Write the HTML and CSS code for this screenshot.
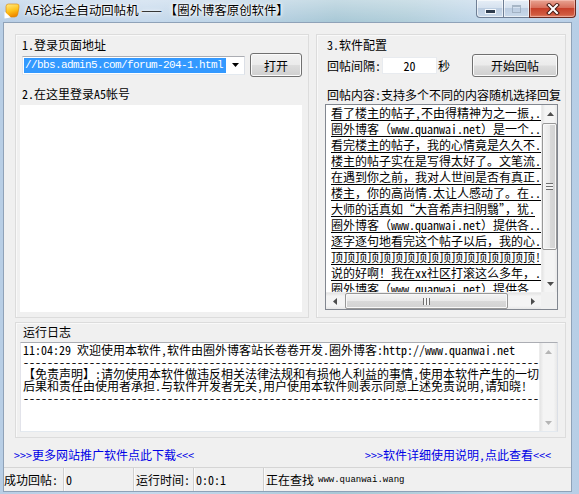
FILE: index.html
```html
<!DOCTYPE html>
<html>
<head>
<meta charset="utf-8">
<link rel="stylesheet" href="styles.css">
</head>
<body>
<div class="window">
  <div class="titlebar">
    <svg class="appicon" viewBox="0 0 16 16" width="16" height="16">
      <defs>
        <linearGradient id="ig" x1="0" y1="0" x2="0.3" y2="1">
          <stop offset="0" stop-color="#ffec8a"/>
          <stop offset="0.6" stop-color="#ffc21a"/>
          <stop offset="1" stop-color="#f08c00"/>
        </linearGradient>
      </defs>
      <path d="M2 3.5 Q2 1 4.5 1 H13 Q15.5 1 15 4 L13.8 11 Q13.3 14 10.5 14 H5 Q2 14 2 11 Z" fill="url(#ig)" stroke="#d98200" stroke-width="0.6"/>
      <path d="M0.5 8.5 L7 14.5 L0.5 15.5 Z" fill="#ffffff"/>
    </svg>
    <span class="title">A5论坛全自动回帖机 —— 【圈外博客原创软件】</span>
    <div class="capbtns">
      <div class="cb cb-min"><span class="minbar"></span></div>
      <div class="cb cb-max"><span class="maxbox"></span></div>
      <div class="cb cb-close">
        <svg width="14" height="12" viewBox="0 0 14 12">
          <path d="M3 2 L11 10 M11 2 L3 10" stroke="#4a1c14" stroke-width="4" stroke-linecap="square"/>
          <path d="M3 2 L11 10 M11 2 L3 10" stroke="#ffffff" stroke-width="2" stroke-linecap="square"/>
        </svg>
      </div>
    </div>
  </div>

  <div class="client">
    <div class="toprow">
      <div class="panel panel-left">
        <div class="lbl lbl1">1.登录页面地址</div>
        <div class="row row1">
          <div class="combo">
            <span class="sel">//bbs.admin5.com/forum-204-1.html</span>
            <svg class="dd" width="7" height="4" viewBox="0 0 7 4"><path d="M0 0 H7 L3.5 4 Z" fill="#000"/></svg>
          </div>
          <div class="btn btn-open">打开</div>
        </div>
        <div class="lbl lbl2">2.在这里登录A5帐号</div>
        <div class="browser"></div>
      </div>

      <div class="panel panel-right">
        <div class="lbl lbl3">3.软件配置</div>
        <div class="row row2">
          <span>回帖间隔:</span>
          <div class="num">20</div>
          <span class="sec">秒</span>
          <div class="btn btn-start">开始回帖</div>
        </div>
        <div class="lbl lbl4">回帖内容:支持多个不同的内容随机选择回复</div>
        <div class="list">
          <div class="items">
            <div class="item">看了楼主的帖子,不由得精神为之一振,.</div>
            <div class="item">圈外博客（www.quanwai.net）是一个..</div>
            <div class="item">看完楼主的帖子，我的心情竟是久久不.</div>
            <div class="item">楼主的帖子实在是写得太好了。文笔流.</div>
            <div class="item">在遇到你之前，我对人世间是否有真正.</div>
            <div class="item">楼主，你的高尚情.太让人感动了。在..</div>
            <div class="item">大师的话真如“大音希声扫阴翳”，犹.</div>
            <div class="item">圈外博客（www.quanwai.net）提供各..</div>
            <div class="item">逐字逐句地看完这个帖子以后，我的心.</div>
            <div class="item">顶顶顶顶顶顶顶顶顶顶顶顶顶顶顶顶顶!</div>
            <div class="item">说的好啊！我在xx社区打滚这么多年，.</div>
            <div class="item">圈外博客（www.quanwai.net）提供各..</div>
          </div>
          <div class="vscroll">
            <div class="arrow"><svg width="7" height="4" viewBox="0 0 7 4"><path d="M0 4 L3.5 0 L7 4 Z" fill="#4d4d4d"/></svg></div>
            <div class="vthumb"><span class="grip-h"></span></div>
            <div class="spacer"></div>
            <div class="arrow"><svg width="7" height="4" viewBox="0 0 7 4"><path d="M0 0 H7 L3.5 4 Z" fill="#4d4d4d"/></svg></div>
          </div>
          <div class="hscroll">
            <div class="arrow"><svg width="4" height="7" viewBox="0 0 4 7"><path d="M4 0 V7 L0 3.5 Z" fill="#4d4d4d"/></svg></div>
            <div class="hthumb"><span class="grip-v"></span></div>
            <div class="spacer"></div>
            <div class="arrow"><svg width="4" height="7" viewBox="0 0 4 7"><path d="M0 0 V7 L4 3.5 Z" fill="#4d4d4d"/></svg></div>
          </div>
          <div class="corner"></div>
        </div>
      </div>
    </div>

    <div class="panel panel-log">
      <div class="lbl lbl5">运行日志</div>
      <div class="logbox">
        <div class="logtext">
          <div class="ll">11:04:29 欢迎使用本软件,软件由圈外博客站长卷卷开发.圈外博客:http://www.quanwai.net</div>
          <div class="ll dash">--------------------------------------------------------------------------------------</div>
          <div class="ll">【免责声明】:请勿使用本软件做违反相关法律法规和有损他人利益的事情,使用本软件产生的一切</div>
          <div class="ll">后果和责任由使用者承担.与软件开发者无关,用户使用本软件则表示同意上述免责说明,请知晓!</div>
          <div class="ll dash">--------------------------------------------------------------------------------------</div>
        </div>
        <div class="vscroll vscroll-off">
          <div class="arrow"><svg width="7" height="4" viewBox="0 0 7 4"><path d="M0 4 L3.5 0 L7 4 Z" fill="#b5b5b5"/></svg></div>
          <div class="spacer"></div>
          <div class="arrow"><svg width="7" height="4" viewBox="0 0 7 4"><path d="M0 0 H7 L3.5 4 Z" fill="#b5b5b5"/></svg></div>
        </div>
      </div>
    </div>

    <div class="links">
      <a class="lnk">&gt;&gt;&gt;更多网站推广软件点此下载&lt;&lt;&lt;</a>
      <a class="lnk">&gt;&gt;&gt;软件详细使用说明,点此查看&lt;&lt;&lt;</a>
    </div>

    <div class="status">
      <div class="cell c1">成功回帖:</div>
      <div class="cell c2">0</div>
      <div class="cell c3">运行时间:</div>
      <div class="cell c4">0:0:1</div>
      <div class="cell c5">正在查找 <span class="small">www.quanwai.wang</span></div>
    </div>
  </div>
</div>
</body>
</html>
```

FILE: styles.css
```css
html, body {
  margin: 0;
  padding: 0;
  background: #c4d8ec;
}

.window {
  width: 579px;
  height: 494px;
  box-sizing: border-box;
  padding: 0 7px 2px 3px;
  display: flex;
  flex-direction: column;
  background:
    linear-gradient(180deg, rgba(255,255,255,0.35) 0px, rgba(255,255,255,0) 22px),
    linear-gradient(90deg, #b8cee5 0%, #c6d9ec 25%, #bcd3e6 40%, #a8c8d6 58%, #b1ceda 70%, #c3d8ec 85%, #b7cee6 100%);
  font-family: "Noto Sans Mono CJK SC", "Noto Sans CJK SC", "DejaVu Sans", sans-serif;
  font-size: 12px;
  color: #000;
  overflow: hidden;
}

/* ---------- title bar ---------- */
.titlebar {
  height: 22px;
  flex: none;
  display: flex;
  align-items: flex-start;
}

.appicon {
  margin: 3px 0 0 1px;
  flex: none;
}

.title {
  margin-left: 5px;
  line-height: 20px;
  font-size: 12.4px;
  white-space: nowrap;
  font-family: "Noto Sans CJK SC", sans-serif;
  text-shadow: 0 0 5px #fff, 0 0 3px #fff, 0 0 1px #fff;
}

.capbtns {
  margin-left: auto;
  margin-right: -4px;
  display: flex;
  height: 18px;
  flex: none;
}

.cb {
  box-sizing: border-box;
  height: 18px;
  display: flex;
  align-items: center;
  justify-content: center;
  border: 1px solid #6f7f95;
  border-top: none;
}

.cb-min {
  width: 27px;
  border-right: none;
  border-radius: 0 0 0 4px;
  background: linear-gradient(180deg, #e6eef7 0%, #d6e2ef 45%, #bccde1 50%, #c9d9ea 100%);
  box-shadow: inset 0 0 0 1px rgba(255,255,255,0.6);
}

.minbar {
  width: 9px;
  height: 3px;
  margin-top: 5px;
  background: #2f3d4f;
  border: 1px solid #f4f8fc;
}

.cb-max {
  width: 26px;
  border-right: none;
  background: linear-gradient(180deg, #e6eef7 0%, #d6e2ef 45%, #bccde1 50%, #c9d9ea 100%);
  box-shadow: inset 0 0 0 1px rgba(255,255,255,0.6);
}

.maxbox {
  width: 7px;
  height: 5px;
  border: 1px solid #9aaabb;
  border-top-width: 2px;
  opacity: 0.8;
}

.cb-close {
  width: 47px;
  border-radius: 0 0 4px 0;
  border-color: #6b2a20;
  background: linear-gradient(180deg, #e8a493 0%, #d8705c 45%, #c7412b 50%, #d05a3f 85%, #e0846a 100%);
  box-shadow: inset 0 0 0 1px rgba(255,210,200,0.5);
}

/* ---------- client ---------- */
.client {
  flex: 1;
  display: flex;
  flex-direction: column;
  background: #f0f0f0;
  border: 1px solid #8fa2b8;
  min-height: 0;
}

.toprow {
  display: flex;
  gap: 7px;
  margin: 11px 0 0 11px;
}

.panel {
  box-sizing: border-box;
  border: 1px solid #dcdcdc;
  box-shadow: inset 1px 1px 0 #f9f9f9;
  display: flex;
  flex-direction: column;
}

.panel-left {
  width: 294px;
  height: 284px;
}

.panel-right {
  width: 250px;
  height: 284px;
}

.lbl {
  height: 12px;
  line-height: 12px;
  white-space: nowrap;
}

.lbl1 { margin: 4px 0 0 6px; }
.lbl2 { margin: 11px 0 0 6px; }
.lbl3 { margin: 4px 0 0 10px; }
.lbl4 { margin: 12px 0 0 10px; }
.lbl5 { margin: 3px 0 0 7px; }

.row {
  display: flex;
  align-items: center;
  height: 24px;
  margin-top: 2px;
}

.row1 { margin-left: 6px; }
.row2 { margin-left: 10px; }

.combo {
  width: 223px;
  height: 19px;
  box-sizing: border-box;
  border: 1px solid;
  border-color: #abadb3 #dbdfe6 #e3e9ef #e2e3ea;
  background: #fff;
  display: flex;
  align-items: center;
  padding-left: 1px;
}

.sel {
  background: #3399ff;
  color: #fff;
  font-family: "Liberation Mono", monospace;
  font-size: 11px;
  letter-spacing: -0.6px;
  line-height: 15px;
  height: 15px;
  padding: 0 3px 0 1px;
  white-space: nowrap;
}

.dd {
  margin-left: auto;
  margin-right: 5px;
}

.btn {
  box-sizing: border-box;
  border: 1px solid #707070;
  border-radius: 3px;
  background: linear-gradient(180deg, #f2f2f2 0%, #ebebeb 48%, #dddddd 52%, #cfcfcf 100%);
  box-shadow: inset 0 0 0 1px #fbfbfb;
  display: flex;
  align-items: center;
  justify-content: center;
  white-space: nowrap;
}

.btn-open {
  width: 52px;
  height: 24px;
  margin-left: 5px;
}

.btn-start {
  width: 86px;
  height: 23px;
  margin-left: 22px;
}

.num {
  width: 55px;
  height: 17px;
  box-sizing: border-box;
  margin-left: 1px;
  background: #fff;
  border: 1px solid #e8ebef;
  text-align: center;
  line-height: 15px;
}

.sec { margin-left: 1px; }

.browser {
  margin: 5px 0 0 4px;
  width: 282px;
  height: 207px;
  background: #fff;
}

/* ---------- list ---------- */
.list {
  margin: 3px 0 0 8px;
  width: 233px;
  height: 206px;
  box-sizing: border-box;
  border: 1px solid #828790;
  background: #fff;
  display: grid;
  grid-template-columns: 1fr 16px;
  grid-template-rows: 1fr 17px;
}

.items {
  overflow: hidden;
  padding-left: 5px;
  min-width: 0;
}

.item {
  height: 16px;
  line-height: 16px;
  white-space: nowrap;
  overflow: hidden;
  text-decoration: underline;
  text-underline-offset: 2px;
}

.vscroll {
  display: flex;
  flex-direction: column;
  background: linear-gradient(90deg, #e4e4e4 0%, #f4f4f4 20%, #f4f4f4 80%, #e8e8e8 100%);
  border-left: 1px solid #ececec;
}

.hscroll {
  display: flex;
  background: linear-gradient(180deg, #e4e4e4 0%, #f4f4f4 20%, #f4f4f4 80%, #e8e8e8 100%);
  border-top: 1px solid #ececec;
}

.arrow {
  flex: none;
  width: 16px;
  height: 17px;
  display: flex;
  align-items: center;
  justify-content: center;
}

.hscroll .arrow {
  width: 17px;
  height: 16px;
}

.spacer { flex: 1; }

.vthumb {
  margin: 1px 0 0 0;
  height: 127px;
  box-sizing: border-box;
  border: 1px solid #979797;
  border-radius: 2px;
  background: linear-gradient(90deg, #f4f4f4 0%, #e9e9e9 50%, #d9d9d9 51%, #d2d2d2 100%);
  box-shadow: inset 0 0 0 1px #f8f8f8;
  display: flex;
  align-items: center;
  justify-content: center;
}

.grip-h {
  width: 7px;
  height: 7px;
  background: repeating-linear-gradient(180deg, #6f6f6f 0px, #6f6f6f 1px, #f4f4f4 1px, #f4f4f4 3px);
}

.hthumb {
  margin-left: 2px;
  width: 163px;
  box-sizing: border-box;
  border: 1px solid #979797;
  border-radius: 2px;
  background: linear-gradient(180deg, #f4f4f4 0%, #e9e9e9 50%, #d9d9d9 51%, #d2d2d2 100%);
  box-shadow: inset 0 0 0 1px #f8f8f8;
  display: flex;
  align-items: center;
  justify-content: center;
}

.grip-v {
  width: 7px;
  height: 7px;
  background: repeating-linear-gradient(90deg, #6f6f6f 0px, #6f6f6f 1px, #f4f4f4 1px, #f4f4f4 3px);
}

.corner {
  background: #f0f0f0;
}

/* ---------- log ---------- */
.panel-log {
  margin: 4px 0 0 11px;
  width: 551px;
  height: 116px;
}

.logbox {
  margin: 4px 0 0 4px;
  width: 538px;
  height: 90px;
  box-sizing: border-box;
  border: 1px solid;
  border-color: #abadb3 #dbdfe6 #e3e9ef #e2e3ea;
  background: #fff;
  display: flex;
}

.logtext {
  flex: 1;
  min-width: 0;
  padding: 1px 0 0 2px;
}

.ll {
  height: 12px;
  line-height: 12px;
  white-space: nowrap;
}

.vscroll-off {
  width: 17px;
  flex: none;
}

.vscroll-off .arrow {
  width: 17px;
}

/* ---------- links ---------- */
.links {
  display: flex;
  justify-content: space-between;
  margin-top: 11px;
  padding: 0 20px 0 10px;
  height: 12px;
  line-height: 12px;
}

.lnk {
  color: #0000e6;
  text-decoration: none;
  white-space: nowrap;
}

/* ---------- status ---------- */
.status {
  margin-top: auto;
  height: 24px;
  box-sizing: border-box;
  border-top: 1px solid #d5d5d5;
  display: flex;
  align-items: stretch;
}

.cell {
  display: flex;
  align-items: center;
  box-sizing: border-box;
  white-space: nowrap;
  padding-left: 2px;
}

.c1 { width: 59px; padding-left: 0; }
.c2 { width: 70px; }
.c3 { width: 60px; }
.c4 { width: 70px; }
.c5 { flex: 1; }

.c2, .c3, .c4, .c5 {
  border-left: 1px solid #cfcfcf;
  box-shadow: inset 1px 0 0 #fafafa;
}

.small {
  font-family: "Liberation Mono", monospace;
  font-size: 9px;
  margin-left: 4px;
}
```
